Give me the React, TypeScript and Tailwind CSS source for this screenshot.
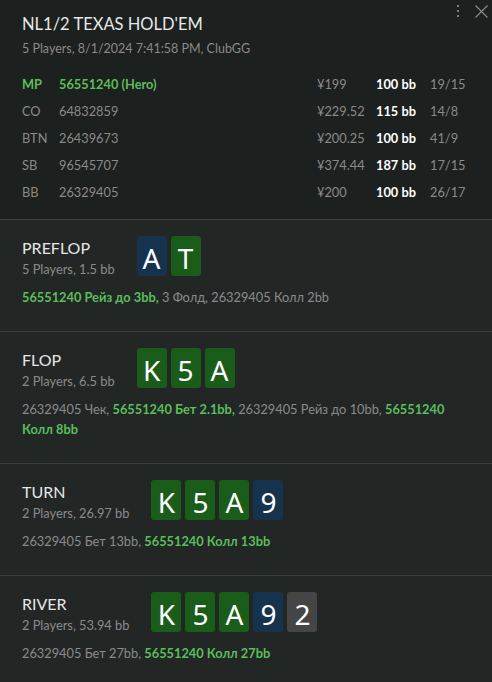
import React from "react";

type Card = { v: string; c: "g" | "b" | "k" };

const cardBg: Record<string, string> = {
  g: "bg-[#1a5c19]",
  b: "bg-[#15324e]",
  k: "bg-[#454545]",
};

function Cards({ cards }: { cards: Card[] }) {
  return (
    <div className="flex gap-[4px]">
      {cards.map((c, i) => (
        <div
          key={i}
          className={`${cardBg[c.c]} w-[30px] h-[40px] rounded-[3px] flex items-center justify-center text-white text-[28px] leading-none pt-[3px]`}
          style={{ fontFamily: '"Noto Sans", sans-serif' }}
        >
          {c.v}
        </div>
      ))}
    </div>
  );
}

type Seg = { t: string; hero?: boolean };

function Street({
  name,
  sub,
  cards,
  segs,
}: {
  name: string;
  sub: string;
  cards: Card[];
  segs: Seg[];
}) {
  return (
    <div className="border-t border-[#3b403e] bg-[#222726] pl-[22px] pr-[30px] pt-[16px] pb-[24px]">
      <div className="flex items-start gap-[22px]">
        <div className="flex flex-col">
          <div className="text-[16px] leading-[22px] text-[#e6e6e6] mt-[1px]">{name}</div>
          <div className="text-[12.8px] leading-[20px] text-[#8a8a8a]">{sub}</div>
        </div>
        <Cards cards={cards} />
      </div>
      <p className="mt-[8px] text-[12.8px] leading-[20px] text-[#8a8a8a]">
        {segs.map((s, i) =>
          s.hero ? (
            <b key={i} className="font-bold text-[#5cbd5a]">
              {s.t}
            </b>
          ) : (
            <React.Fragment key={i}>{s.t}</React.Fragment>
          )
        )}
      </p>
    </div>
  );
}

const players = [
  { pos: "MP", id: "56551240 (Hero)", stack: "¥199", bb: "100 bb", r: "19/15", hero: true },
  { pos: "CO", id: "64832859", stack: "¥229.52", bb: "115 bb", r: "14/8" },
  { pos: "BTN", id: "26439673", stack: "¥200.25", bb: "100 bb", r: "41/9" },
  { pos: "SB", id: "96545707", stack: "¥374.44", bb: "187 bb", r: "17/15" },
  { pos: "BB", id: "26329405", stack: "¥200", bb: "100 bb", r: "26/17" },
];

export default function App() {
  return (
    <div
      className="w-[492px] h-[682px] overflow-hidden bg-[#222726]"
      style={{ fontFamily: 'Lato, "Noto Sans", sans-serif' }}
    >
      <div className="relative bg-[#1c201e] pl-[22px] pr-[30px] pt-[11px] pb-[13px]">
        <div className="absolute right-[4px] top-[4px] flex items-center gap-[15px]">
          <svg width="4" height="14" viewBox="0 0 4 14">
            <rect x="1" y="1" width="2" height="2" fill="#7d7d7d" />
            <rect x="1" y="6" width="2" height="2" fill="#7d7d7d" />
            <rect x="1" y="11" width="2" height="2" fill="#7d7d7d" />
          </svg>
          <svg width="13" height="13" viewBox="0 0 13 13">
            <path d="M0.5 0.5 L12.5 12.5 M12.5 0.5 L0.5 12.5" stroke="#8a8a8a" strokeWidth="1.2" />
          </svg>
        </div>
        <div className="text-[16.5px] leading-[26px] text-[#e8e8e8]">NL1/2 TEXAS HOLD'EM</div>
        <div className="mt-[2px] text-[12.5px] leading-[20px] text-[#8a8a8a]">
          5 Players, 8/1/2024 7:41:58 PM, ClubGG
        </div>
        <div className="mt-[12px] flex flex-col">
          {players.map((p) => (
            <div key={p.pos} className="flex items-center h-[27px] text-[12.8px]">
              <div
                className={`w-[37px] ${p.hero ? "font-bold text-[#5cbd5a]" : "text-[#8a8a8a]"}`}
              >
                {p.pos}
              </div>
              <div
                className={`flex-1 ${p.hero ? "font-bold text-[#5cbd5a]" : "text-[#8a8a8a]"}`}
              >
                {p.id}
              </div>
              <div className="w-[59px] text-[#8a8a8a]">{p.stack}</div>
              <div className="w-[54px] font-bold text-white">{p.bb}</div>
              <div className="w-[32px] text-[#8a8a8a]">{p.r}</div>
            </div>
          ))}
        </div>
      </div>
      <Street
        name="PREFLOP"
        sub="5 Players, 1.5 bb"
        cards={[
          { v: "A", c: "b" },
          { v: "T", c: "g" },
        ]}
        segs={[
          { t: "56551240 Рейз до 3bb,", hero: true },
          { t: " 3 Фолд, 26329405 Колл 2bb" },
        ]}
      />
      <Street
        name="FLOP"
        sub="2 Players, 6.5 bb"
        cards={[
          { v: "K", c: "g" },
          { v: "5", c: "g" },
          { v: "A", c: "g" },
        ]}
        segs={[
          { t: "26329405 Чек, " },
          { t: "56551240 Бет 2.1bb,", hero: true },
          { t: " 26329405 Рейз до 10bb, " },
          { t: "56551240 Колл 8bb", hero: true },
        ]}
      />
      <Street
        name="TURN"
        sub="2 Players, 26.97 bb"
        cards={[
          { v: "K", c: "g" },
          { v: "5", c: "g" },
          { v: "A", c: "g" },
          { v: "9", c: "b" },
        ]}
        segs={[
          { t: "26329405 Бет 13bb, " },
          { t: "56551240 Колл 13bb", hero: true },
        ]}
      />
      <Street
        name="RIVER"
        sub="2 Players, 53.94 bb"
        cards={[
          { v: "K", c: "g" },
          { v: "5", c: "g" },
          { v: "A", c: "g" },
          { v: "9", c: "b" },
          { v: "2", c: "k" },
        ]}
        segs={[
          { t: "26329405 Бет 27bb, " },
          { t: "56551240 Колл 27bb", hero: true },
        ]}
      />
    </div>
  );
}
